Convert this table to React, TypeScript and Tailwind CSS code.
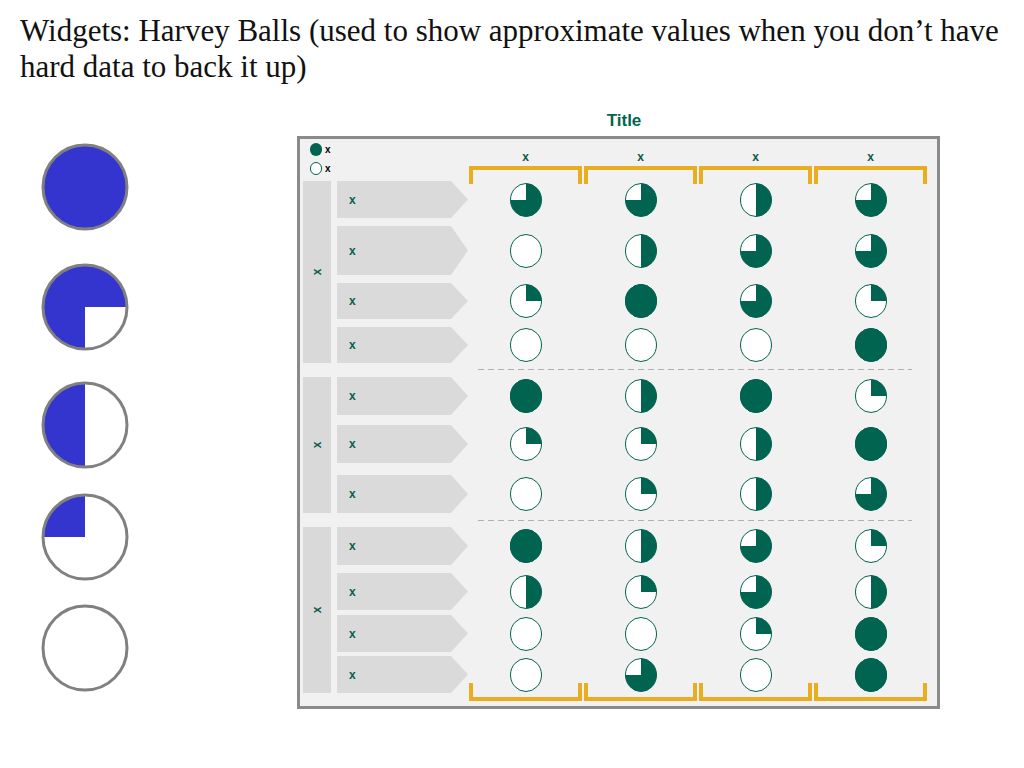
import React from "react";

const TEAL = "#006450";

type Row = { h: string; mt: string; v: number[] };
type Group = { rows: Row[] };

const groups: Group[] = [
    {
        rows: [
            { h: "h-[37px]", mt: "mt-0", v: [3, 3, 2, 3] },
            { h: "h-[49px]", mt: "mt-[8px]", v: [0, 2, 3, 3] },
            { h: "h-[36px]", mt: "mt-[8px]", v: [1, 4, 3, 1] },
            { h: "h-[36px]", mt: "mt-[8px]", v: [0, 0, 0, 4] },
        ],
    },
    {
        rows: [
            { h: "h-[38px]", mt: "mt-0", v: [4, 2, 4, 1] },
            { h: "h-[38px]", mt: "mt-[10px]", v: [1, 1, 2, 4] },
            { h: "h-[38px]", mt: "mt-[12px]", v: [0, 1, 2, 3] },
        ],
    },
    {
        rows: [
            { h: "h-[38px]", mt: "mt-0", v: [4, 2, 3, 1] },
            { h: "h-[37px]", mt: "mt-[8px]", v: [2, 1, 3, 2] },
            { h: "h-[37px]", mt: "mt-[5px]", v: [0, 0, 1, 4] },
            { h: "h-[37px]", mt: "mt-[4px]", v: [0, 3, 0, 4] },
        ],
    },
];

// small teal ball, filled clockwise from 12 o'clock
const Ball = ({ q }: { q: number }) => {
    const cx = 16, cy = 17, rx = 15.5, ry = 16.5;
    const ends = ["", `${cx + rx} ${cy}`, `${cx} ${cy + ry}`, `${cx - rx} ${cy}`];
    return (
        <svg width="32" height="34" viewBox="0 0 32 34">
            <ellipse cx={cx} cy={cy} rx={rx} ry={ry} fill="white" stroke={TEAL} strokeWidth="1" />
            {q === 4 && <ellipse cx={cx} cy={cy} rx={rx} ry={ry} fill={TEAL} stroke={TEAL} strokeWidth="1" />}
            {q > 0 && q < 4 && (
                <path
                    d={`M${cx} ${cy} L${cx} ${cy - ry} A${rx} ${ry} 0 ${q === 3 ? 1 : 0} 1 ${ends[q]} Z`}
                    fill={TEAL}
                />
            )}
        </svg>
    );
};

// big blue balls on the left
const BigBall = ({ kind }: { kind: number }) => {
    const c = 45, r = 42;
    let d = "";
    if (kind === 3) d = `M${c} ${c} L${c + r} ${c} A${r} ${r} 0 1 0 ${c} ${c + r} Z`;
    if (kind === 2) d = `M${c} ${c - r} A${r} ${r} 0 0 0 ${c} ${c + r} Z`;
    if (kind === 1) d = `M${c} ${c} L${c} ${c - r} A${r} ${r} 0 0 0 ${c - r} ${c} Z`;
    return (
        <svg width="90" height="90" viewBox="0 0 90 90">
            <circle cx={c} cy={c} r={r} fill={kind === 4 ? "#3434cf" : "white"} />
            {d && <path d={d} fill="#3434cf" />}
            <circle cx={c} cy={c} r={r} fill="none" stroke="#808080" strokeWidth="3" />
        </svg>
    );
};

const Label = ({ className = "" }: { className?: string }) => (
    <span className={`text-[12px] font-bold leading-none text-[#0b5e4a] ${className}`}>x</span>
);

const App = () => {
    return (
        <div className="w-[1024px] h-[768px] bg-white font-['Liberation_Sans',Arial,sans-serif]">
            <h1 className="px-[20px] pt-[13px] text-[31px] leading-[36px] text-[#111] font-['Liberation_Serif','Times_New_Roman',serif]">
                Widgets: Harvey Balls (used to show approximate values when you don’t have hard data to back it up)
            </h1>

            <div className="mt-[21px] flex">
                <div className="w-[297px] pl-[40px] pt-[36px] flex flex-col">
                    <BigBall kind={4} />
                    <div className="mt-[30px]"><BigBall kind={3} /></div>
                    <div className="mt-[28px]"><BigBall kind={2} /></div>
                    <div className="mt-[22px]"><BigBall kind={1} /></div>
                    <div className="mt-[21px]"><BigBall kind={0} /></div>
                </div>

                <div className="w-[643px] flex flex-col">
                    <div className="pl-[11px] pt-[5px] text-center text-[17px] leading-[20px] font-bold text-[#00664f]">Title</div>
                    <div className="mt-[5px] border-[3px] border-[#8a8a8a] bg-[#f1f1f1] flex flex-col">
                        {/* header: legend + column labels with top brackets */}
                        <div className="h-[42px] flex">
                            <div className="w-[168px] pl-[10px] pt-[4px] flex flex-col gap-[6px]">
                                <div className="flex items-center gap-[3px]">
                                    <span className="w-[12px] h-[13px] rounded-full bg-[#006450]" />
                                    <span className="text-[10px] font-bold leading-none text-black">x</span>
                                </div>
                                <div className="flex items-center gap-[3px]">
                                    <span className="w-[12px] h-[13px] rounded-full bg-white border border-[#006450]" />
                                    <span className="text-[10px] font-bold leading-none text-black">x</span>
                                </div>
                            </div>
                            {[0, 1, 2, 3].map((i) => (
                                <div key={i} className="w-[115px] px-[1px] pt-[12px] flex flex-col items-center">
                                    <Label className="h-[13px] flex items-center" />
                                    <div className="mt-[3px] w-full h-[18px] shrink-0 border-t-4 border-x-4 border-[#e8ae1f]" />
                                </div>
                            ))}
                        </div>

                        {groups.map((g, gi) => (
                            <React.Fragment key={gi}>
                                {gi > 0 && (
                                    <div className={`h-[14px] pl-[178px] ${gi === 1 ? "pt-[6px]" : "pt-[7px]"}`}>
                                        <div className="w-[434px] h-px bg-[repeating-linear-gradient(90deg,#b0b0b0_0_6px,transparent_6px_10px)]" />
                                    </div>
                                )}
                                <div className="flex pl-[3px]">
                                    <div className="w-[28px] bg-[#d9d9d9] flex items-center justify-center">
                                        <Label className="-rotate-90" />
                                    </div>
                                    <div className="ml-[6px] flex flex-col">
                                        {g.rows.map((r, ri) => (
                                            <div key={ri} className={`flex ${r.h} ${r.mt}`}>
                                                <div className="w-[131px] h-full bg-[#dadada] pl-[12px] flex items-center [clip-path:polygon(0_0,calc(100%-17px)_0,100%_50%,calc(100%-17px)_100%,0_100%)]">
                                                    <Label />
                                                </div>
                                                {r.v.map((q, ci) => (
                                                    <div key={ci} className="w-[115px] flex items-center justify-center">
                                                        <Ball q={q} />
                                                    </div>
                                                ))}
                                            </div>
                                        ))}
                                    </div>
                                </div>
                            </React.Fragment>
                        ))}

                        {/* bottom brackets */}
                        <div className="h-[13px] flex pl-[168px]">
                            {[0, 1, 2, 3].map((i) => (
                                <div key={i} className="w-[115px] px-[1px]">
                                    <div className="-mt-[10px] w-full h-[18px] border-b-4 border-x-4 border-[#e8ae1f]" />
                                </div>
                            ))}
                        </div>
                    </div>
                </div>
            </div>
        </div>
    );
};

export default App;
